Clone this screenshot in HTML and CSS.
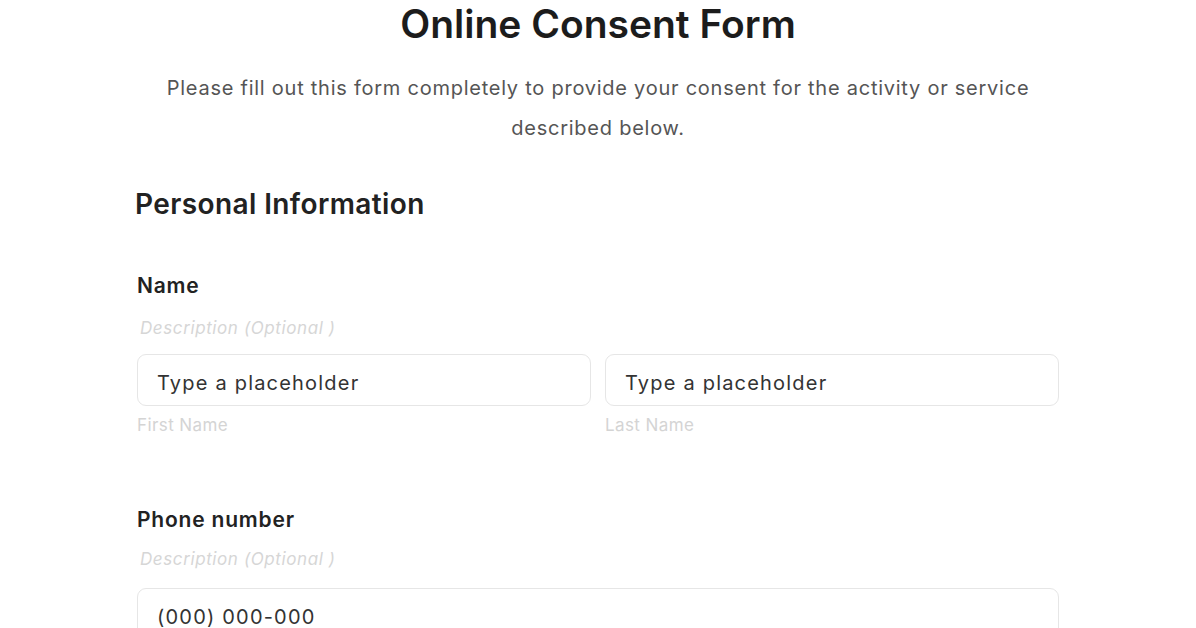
FILE: index.html
```html
<!DOCTYPE html>
<html>
<head>
<meta charset="utf-8">
<link rel="stylesheet" href="styles.css">
</head>
<body>
<div class="page">
  <h1 class="title">Online Consent Form</h1>
  <p class="intro">Please fill out this form completely to provide your consent for the activity or service described below.</p>
  <h2 class="section">Personal Information</h2>
  <div class="field">
    <div class="label">Name</div>
    <div class="desc">Description (Optional )</div>
    <div class="row">
      <div class="col">
        <div class="input">Type a placeholder</div>
        <div class="sub">First Name</div>
      </div>
      <div class="col">
        <div class="input">Type a placeholder</div>
        <div class="sub">Last Name</div>
      </div>
    </div>
  </div>
  <div class="field phone">
    <div class="label">Phone number</div>
    <div class="desc">Description (Optional )</div>
    <div class="input">(000) 000-000</div>
  </div>
</div>
</body>
</html>
```
FILE: styles.css
```css
html, body {
  margin: 0;
  padding: 0;
  background: #ffffff;
}
body {
  font-family: Inter, "Noto Sans", "Liberation Sans", sans-serif;
  color: #1a1a1a;
}
.page {
  width: 922px;
  margin: 0 auto;
  padding-top: 2px;
}
.title {
  margin: 0;
  text-align: center;
  font-size: 39px;
  font-weight: 600;
  line-height: 44px;
  letter-spacing: 0;
  color: #1c1c1c;
}
.intro {
  margin: 22px auto 0;
  width: 900px;
  text-align: center;
  font-size: 20px;
  letter-spacing: 0.75px;
  line-height: 40px;
  color: #555555;
}
.section {
  margin: 39px 0 0 -2px;
  font-size: 28px;
  font-weight: 600;
  letter-spacing: 0.4px;
  line-height: 34px;
  color: #222222;
}
.field {
  margin-top: 52px;
}
.label {
  font-size: 21px;
  font-weight: 600;
  letter-spacing: 0.8px;
  line-height: 26px;
  color: #222222;
}
.desc {
  margin-top: 17px;
  margin-left: 3px;
  font-size: 17px;
  font-style: italic;
  letter-spacing: 0.6px;
  line-height: 24px;
  color: #d6d6d6;
}
.row {
  display: flex;
  gap: 14px;
  margin-top: 14px;
}
.col {
  flex: 1;
}
.input {
  box-sizing: border-box;
  height: 52px;
  border: 1.5px solid #e6e6e6;
  border-radius: 9px;
  padding: 5px 19px 0;
  display: flex;
  align-items: center;
  font-size: 20px;
  letter-spacing: 1.2px;
  color: #333333;
}
.sub {
  margin-top: 8px;
  font-size: 17px;
  letter-spacing: 0.4px;
  line-height: 22px;
  color: #d4d4d4;
}
.phone {
  margin-top: 71px;
}
.phone .input {
  margin-top: 17px;
}
.phone .desc {
  margin-top: 14px;
}
```
